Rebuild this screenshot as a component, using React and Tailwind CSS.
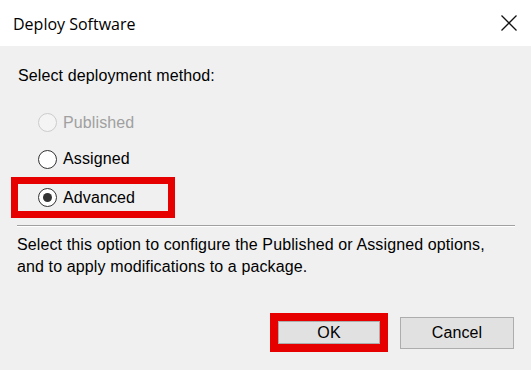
import React from "react";

function Radio({ state }) {
  if (state === "disabled") {
    return <span className="block w-[19px] h-[19px] rounded-full border-[1.5px] border-[#cccccc] bg-[#f4f4f4] shrink-0" />;
  }
  return (
    <span className="flex items-center justify-center w-[19px] h-[19px] rounded-full border-[1.5px] border-[#333333] bg-white shrink-0">
      {state === "checked" && <span className="block w-[9px] h-[9px] rounded-full bg-[#333333]" />}
    </span>
  );
}

export default function App() {
  return (
    <div className="w-[531px] h-[370px] flex flex-col bg-[#f0f0f0] text-[#000000] overflow-hidden">
      <div className="h-[46px] bg-white flex items-center justify-between pl-[13px] pr-[14px] shrink-0">
        <span className="text-[16px] text-[#000] font-['Open_Sans',sans-serif] leading-none mt-[2px]">Deploy Software</span>
        <svg width="16" height="16" viewBox="0 0 16 16" className="text-[#111]">
          <path d="M0.5 0.5 L15.5 15.5 M15.5 0.5 L0.5 15.5" stroke="currentColor" strokeWidth="1.3" fill="none" />
        </svg>
      </div>
      <div className="flex flex-col font-['Liberation_Sans',Arial,sans-serif] text-[16px] tracking-[0.12px]">
        <div className="mt-[21px] ml-[18px] h-[18px] leading-[18px]">Select deployment method:</div>
        <div className="mt-[19px] h-[37px] flex items-center pl-[38px] gap-[6px]">
          <Radio state="disabled" />
          <span className="text-[#a0a0a0] leading-[18px]">Published</span>
        </div>
        <div className="h-[36px] flex items-center pl-[38px] gap-[6px]">
          <Radio state="off" />
          <span className="leading-[18px]">Assigned</span>
        </div>
        <div className="ml-[11px] w-[164px] h-[41px] border-[7px] border-[#e60000] flex items-center pl-[20px] gap-[6px]">
          <Radio state="checked" />
          <span className="leading-[18px]">Advanced</span>
        </div>
        <div className="mt-[7px] ml-[17px] mr-[16px] h-[2px] border-t border-[#a0a0a0] border-b border-b-white" />
        <div className="mt-[7px] ml-[17px] leading-[22px]">
          Select this option to configure the Published or Assigned options,
          <br />
          and to apply modifications to a package.
        </div>
        <div className="mt-[35px] flex items-center justify-end pr-[17px] gap-[12px]">
          <div className="w-[118px] h-[39px] border-[8px] border-[#e60000] flex">
            <div className="flex-1 bg-[#e1e1e1] border border-[#adadad] flex items-center justify-center leading-none">OK</div>
          </div>
          <div className="w-[114px] h-[32px] bg-[#e1e1e1] border border-[#adadad] flex items-center justify-center leading-none">Cancel</div>
        </div>
      </div>
    </div>
  );
}
